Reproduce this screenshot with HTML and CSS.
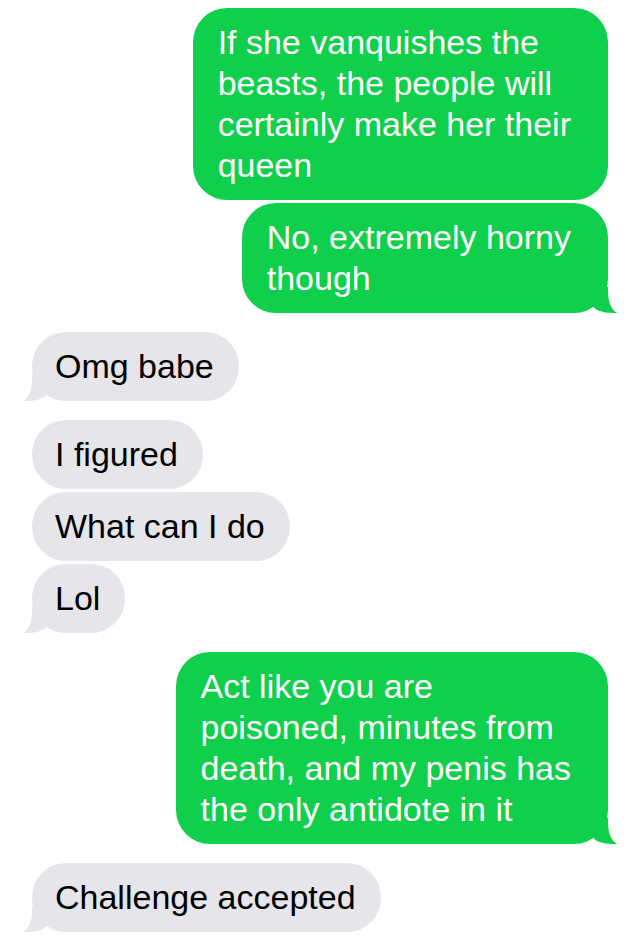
FILE: index.html
```html
<!doctype html>
<html lang="en">
  <head>
    <meta charset="UTF-8" />
    <meta name="viewport" content="width=device-width, initial-scale=1.0" />
    <title>Messages</title>
    <link rel="stylesheet" href="styles.css">
  </head>
  <body>
    <!-- Conversation thread -->
    <div class="thread">
      <div class="group sent">
        <p class="bubble">If she vanquishes the<br>beasts, the people will<br>certainly make her their<br>queen</p>
        <p class="bubble tail">No, extremely horny<br>though</p>
      </div>

      <div class="group received">
        <p class="bubble tail">Omg babe</p>
      </div>

      <div class="group received">
        <p class="bubble">I figured</p>
        <p class="bubble">What can I do</p>
        <p class="bubble tail">Lol</p>
      </div>

      <div class="group sent">
        <p class="bubble tail">Act like you are<br>poisoned, minutes from<br>death, and my penis has<br>the only antidote in it</p>
      </div>

      <div class="group received">
        <p class="bubble tail">Challenge accepted</p>
      </div>
    </div>
  </body>
</html>
```

FILE: styles.css
```css
/* Base */
body {
  margin: 0;
  background: #ffffff;
  font-family: "Liberation Sans", Arial, sans-serif;
  -webkit-font-smoothing: antialiased;
}

.thread {
  display: flex;
  flex-direction: column;
  gap: 19px;
  padding: 8px 32px 16px;
}

.group {
  display: flex;
  flex-direction: column;
  gap: 3px;
}

.group.sent {
  align-items: flex-end;
}

.group.received {
  align-items: flex-start;
}

/* Bubbles */
.bubble {
  position: relative;
  margin: 0;
  font-size: 34px;
  line-height: 41px;
  white-space: nowrap;
  border-radius: 34px;
}

.sent .bubble {
  background: #10cf4c;
  color: #ffffff;
  padding: 14px 37px 14px 25px;
}

.received .bubble {
  background: #e5e5ea;
  color: #000000;
  padding: 14px 25px 14px 23px;
}

/* Tails (last bubble in a run) */
.bubble.tail::before,
.bubble.tail::after {
  content: "";
  position: absolute;
  bottom: 0;
}

.sent .bubble.tail::before {
  right: -11px;
  width: 26px;
  height: 26px;
  background: #10cf4c;
  border-bottom-left-radius: 20px 8px;
}

.sent .bubble.tail::after {
  left: 100%;
  width: 20px;
  height: 30px;
  background: #ffffff;
  border-bottom-left-radius: 11px 21px;
}

.received .bubble.tail::before {
  left: -11px;
  width: 26px;
  height: 26px;
  background: #e5e5ea;
  border-bottom-right-radius: 20px 8px;
}

.received .bubble.tail::after {
  right: 100%;
  width: 20px;
  height: 30px;
  background: #ffffff;
  border-bottom-right-radius: 11px 21px;
}
```
